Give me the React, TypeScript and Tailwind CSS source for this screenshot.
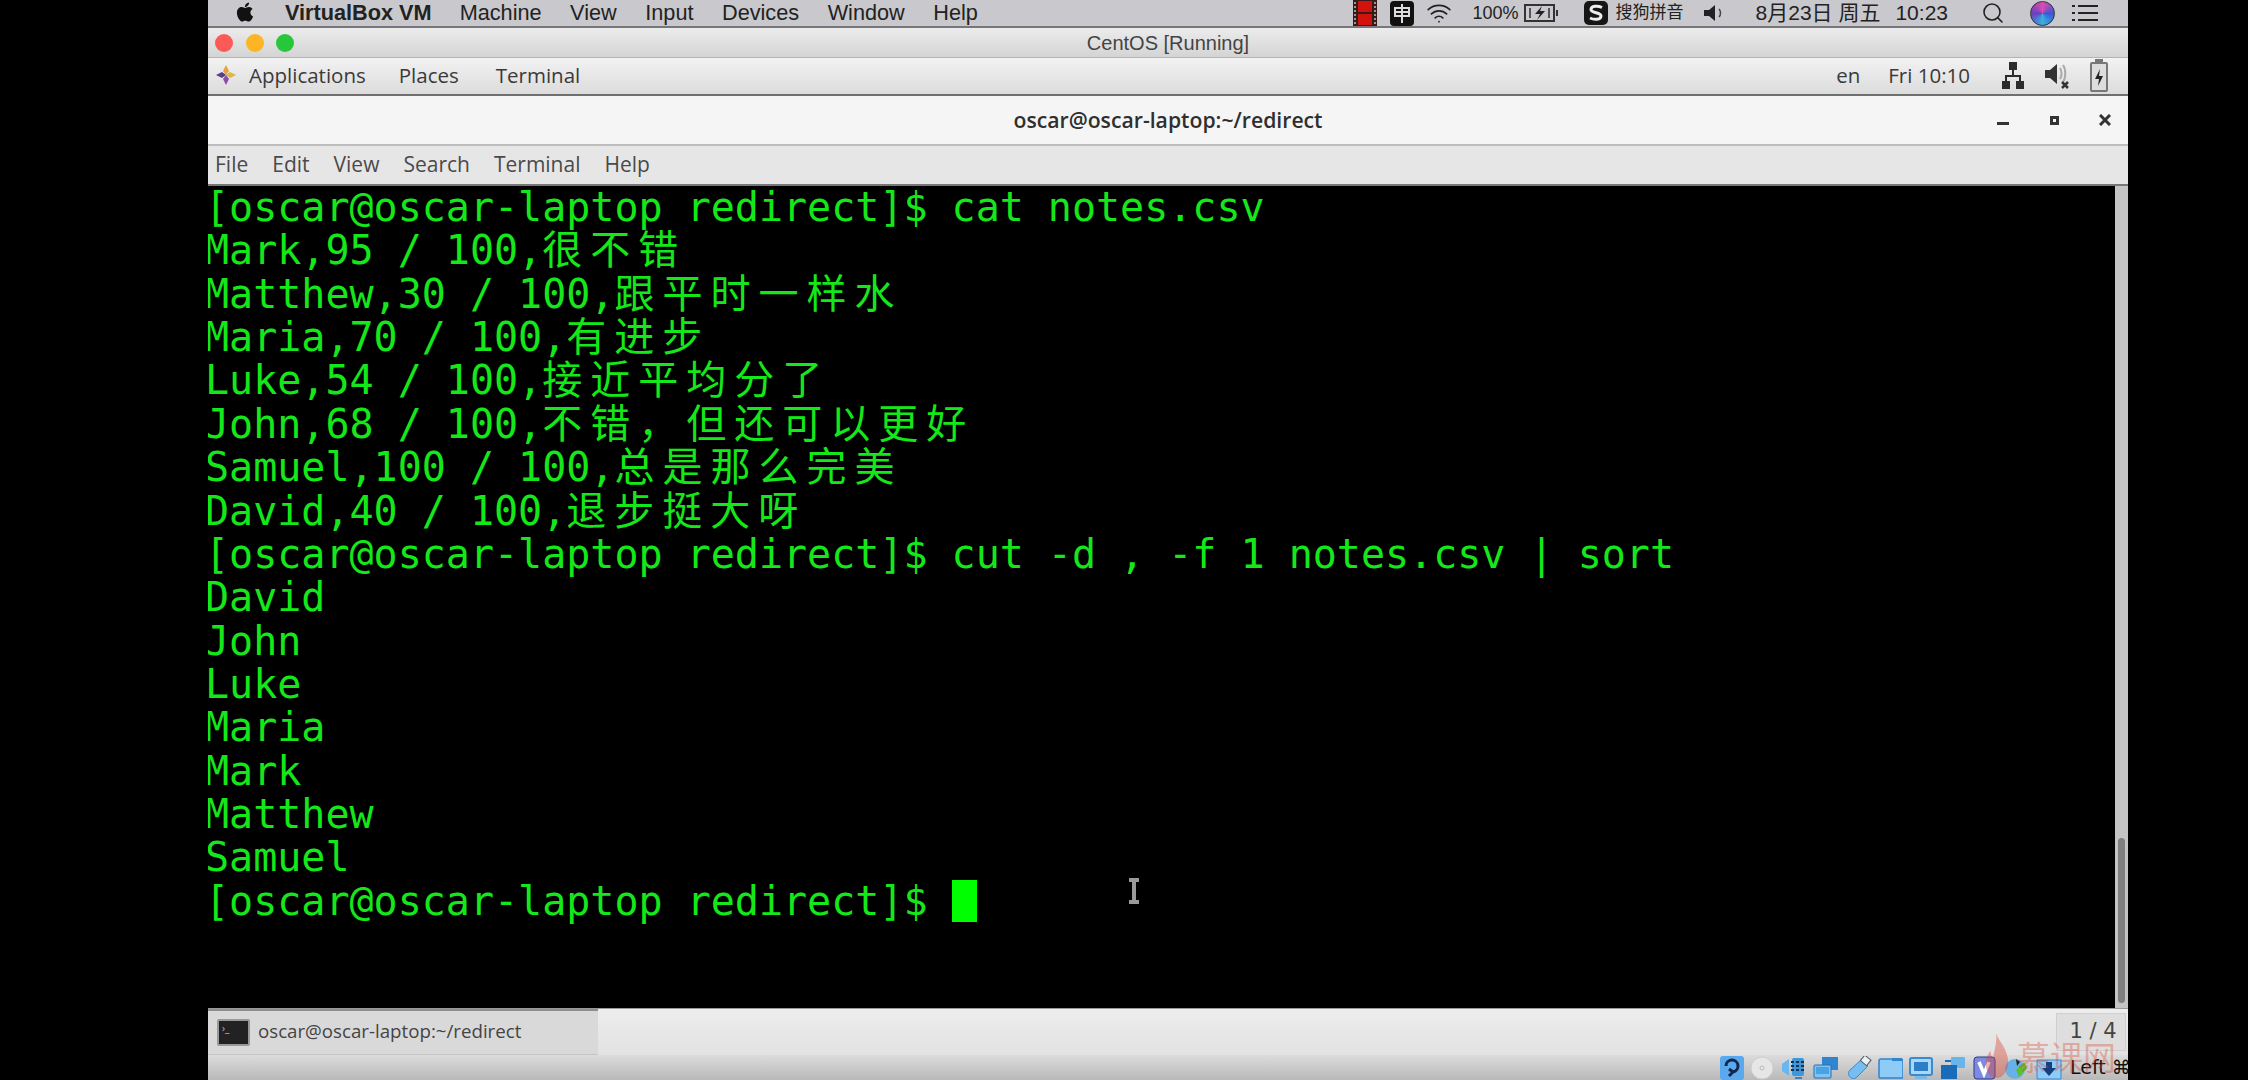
import { Search, Wifi } from 'lucide-react'
import { FaApple } from 'react-icons/fa'

const ui = "font-['Open_Sans','Noto_Sans_CJK_SC',sans-serif]"
const mac = "font-['Liberation_Sans','Noto_Sans_CJK_SC',sans-serif]"

type Line = { text: string; cjk?: string }

const lines: Line[] = [
  { text: '[oscar@oscar-laptop redirect]$ cat notes.csv' },
  { text: 'Mark,95 / 100,', cjk: '很不错' },
  { text: 'Matthew,30 / 100,', cjk: '跟平时一样水' },
  { text: 'Maria,70 / 100,', cjk: '有进步' },
  { text: 'Luke,54 / 100,', cjk: '接近平均分了' },
  { text: 'John,68 / 100,', cjk: '不错，但还可以更好' },
  { text: 'Samuel,100 / 100,', cjk: '总是那么完美' },
  { text: 'David,40 / 100,', cjk: '退步挺大呀' },
  { text: '[oscar@oscar-laptop redirect]$ cut -d , -f 1 notes.csv | sort' },
  { text: 'David' },
  { text: 'John' },
  { text: 'Luke' },
  { text: 'Maria' },
  { text: 'Mark' },
  { text: 'Matthew' },
  { text: 'Samuel' },
]

function MacMenuBar() {
  return (
    <div className={`h-[28px] shrink-0 flex items-center bg-[#c9c8cc] border-b-2 border-[#77767a] text-[21.700px] text-[#222] ${mac}`}>
      <FaApple className="ml-[26px] w-[22px] h-[22px] text-[#111] -mt-[3px]" />
      <span className="ml-[29px] font-bold">VirtualBox VM</span>
      <div className="ml-[28px] flex gap-[28.500px]">
        <span>Machine</span>
        <span>View</span>
        <span>Input</span>
        <span>Devices</span>
        <span>Window</span>
        <span>Help</span>
      </div>
      <div className="ml-auto flex items-center text-[21px]">
        <svg width="24" height="26" viewBox="0 0 24 26">
          <rect x="0" y="0" width="24" height="26" fill="#3a1a18" />
          <path d="M2 2v22M22 2v22" stroke="#999" strokeWidth="2" strokeDasharray="2 2" />
          <rect x="5" y="1" width="14" height="11" fill="#d2120d" />
          <rect x="5" y="14" width="14" height="11" fill="#d2120d" />
        </svg>
        <svg width="24" height="25" viewBox="0 0 24 25" className="ml-[13px]">
          <rect x="0" y="0" width="24" height="25" rx="4" fill="#111" />
          <path d="M5 7h14v8H5zM12 3v19M5 11h14" fill="none" stroke="#ddd" strokeWidth="2" />
        </svg>
        <Wifi className="ml-[10px] w-[30px] h-[26px] text-[#222]" strokeWidth={1.6} />
        <span className="ml-[19px] text-[18px]">100%</span>
        <svg width="36" height="20" viewBox="0 0 36 20" className="ml-[5px]">
          <rect x="1" y="2" width="29" height="16" fill="none" stroke="#333" strokeWidth="2" />
          <path d="M18 3l-7 8h5l-3 6 8-9h-5z" fill="#222" />
          <path d="M6 5v10M25 5v10" stroke="#555" strokeWidth="2" />
          <rect x="32" y="7" width="2" height="6" fill="#333" />
        </svg>
        <svg width="26" height="26" viewBox="0 0 26 26" className="ml-[23px]">
          <rect x="1" y="1" width="24" height="24" rx="5" fill="#161616" />
          <path d="M19 7.500c-4-2-11-2-11 2 0 4 10 2.500 10 6.500 0 4-7 4-11 2" fill="none" stroke="#eee" strokeWidth="3" />
        </svg>
        <span className="ml-[7px] text-[17px]">搜狗拼音</span>
        <svg width="22" height="20" viewBox="0 0 22 20" className="ml-[19px]">
          <path d="M1 7h5l6-5v16l-6-5H1z" fill="#222" />
          <path d="M16 6c2 2 2 6 0 8" fill="none" stroke="#444" strokeWidth="1.500" />
        </svg>
        <span className="ml-[31px]">8月23日 周五</span>
        <span className="ml-[15px]">10:23</span>
        <Search className="ml-[33px] w-[24px] h-[24px] text-[#222]" strokeWidth={1.6} />
        <div className="ml-[25px] w-[25px] h-[25px] rounded-full bg-[conic-gradient(#e04bb0,#3a57d8,#34b3e0,#6a3fc0,#e04bb0)] border border-[#333]" />
        <svg width="28" height="20" viewBox="0 0 28 20" className="ml-[16px] mr-[29px]">
          <path d="M7 3h20M7 10h20M7 17h20" stroke="#222" strokeWidth="2" />
          <path d="M1 3h3M1 10h3M1 17h3" stroke="#222" strokeWidth="2" />
        </svg>
      </div>
    </div>
  )
}

function VBoxTitle() {
  return (
    <div className="h-[30px] shrink-0 relative flex items-center bg-gradient-to-b from-[#ececec] to-[#d4d4d4] border-b border-[#b4b4b4]">
      <div className="ml-[7px] flex gap-[12.500px]">
        <div className="w-[18px] h-[18px] rounded-full bg-[#fb5a56]" />
        <div className="w-[18px] h-[18px] rounded-full bg-[#fdb526]" />
        <div className="w-[18px] h-[18px] rounded-full bg-[#27c73c]" />
      </div>
      <div className={`absolute inset-0 flex items-center justify-center text-[20px] text-[#444] ${mac}`}>CentOS [Running]</div>
    </div>
  )
}

function GnomePanel() {
  return (
    <div className={`h-[38px] shrink-0 flex items-center pb-[2px] bg-gradient-to-b from-[#f2f2f2] to-[#dcdcdc] border-b-2 border-[#6f6f6f] text-[20.500px] text-[#3a3a3a] ${ui}`}>
      <svg width="22" height="22" viewBox="0 0 22 22" className="ml-[7px]">
        <path d="M11 1l3 6-3 4-3-4z" fill="#e8a33a" />
        <path d="M21 11l-6 3-4-3 4-3z" fill="#d7b84a" />
        <path d="M11 21l-3-6 3-4 3 4z" fill="#8a4fa8" />
        <path d="M1 11l6-3 4 3-4 3z" fill="#5d3c8a" />
      </svg>
      <span className="ml-[12px]">Applications</span>
      <span className="ml-[33px]">Places</span>
      <span className="ml-[37px]">Terminal</span>
      <div className="ml-auto flex items-center">
        <span>en</span>
        <span className="ml-[28px]">Fri 10:10</span>
        <svg width="24" height="30" viewBox="0 0 24 30" className="ml-[31px]">
          <path d="M8 2h8v8H8zM1 21h8v8H1zM15 21h8v8h-8z" fill="#2b2b2b" />
          <path d="M12 10v6M5 21v-5h14v5" fill="none" stroke="#2b2b2b" strokeWidth="2" />
        </svg>
        <svg width="26" height="30" viewBox="0 0 26 30" className="ml-[19px]">
          <path d="M1 10h5l7-6v20l-7-6H1z" fill="#333" />
          <path d="M16 8c2 3 2 8 0 11M19 5c3 4 3 13 0 17" fill="none" stroke="#aaa" strokeWidth="2" />
          <path d="M18 22l6 6M24 22l-6 6" stroke="#333" strokeWidth="2.500" />
        </svg>
        <svg width="20" height="34" viewBox="0 0 20 34" className="ml-[19px] mr-[19px]">
          <rect x="2" y="5" width="16" height="28" rx="1" fill="#ddd" stroke="#777" strokeWidth="2" />
          <rect x="6" y="1" width="8" height="4" fill="#777" />
          <path d="M11 11l-5 10h4l-1 7 5-10h-4z" fill="#222" />
        </svg>
      </div>
    </div>
  )
}

function TerminalTitle() {
  return (
    <div className={`h-[50px] shrink-0 relative flex items-center bg-[#f5f5f5] border-b-2 border-[#bdbdbd] ${ui}`}>
      <span className="mx-auto font-semibold text-[21.200px] text-[#2f2f2f]">oscar@oscar-laptop:~/redirect</span>
      <div className="absolute right-0 top-0 h-full flex items-center">
        <div className="w-[12px] h-[3px] bg-[#333] mt-[7px] mr-[41px]" />
        <div className="w-[9px] h-[9px] border-[3px] border-[#333] mr-[40px]" />
        <svg width="12" height="12" viewBox="0 0 12 12" className="mr-[17px]">
          <path d="M1 1l10 10M11 1L1 11" stroke="#333" strokeWidth="3" />
        </svg>
      </div>
    </div>
  )
}

function TerminalMenu() {
  return (
    <div className={`h-[38px] shrink-0 flex items-center gap-[24px] pl-[7px] pb-[1px] bg-[#e6e6e6] text-[21px] text-[#4a4a4a] ${ui}`}>
      <span>File</span>
      <span>Edit</span>
      <span>View</span>
      <span>Search</span>
      <span>Terminal</span>
      <span>Help</span>
    </div>
  )
}

function TerminalBody() {
  return (
    <div className="flex-1 min-h-0 flex border-t-2 border-[#777]">
      <div className="flex-1 bg-black overflow-hidden font-['DejaVu_Sans_Mono','Noto_Sans_CJK_SC',monospace] text-[40px] leading-[43.37px] text-[#15e81a] whitespace-pre">
        <div className="-ml-[3px]">
          {lines.map((l, i) => (
            <div key={i} className="h-[43.37px]">
              {l.text}
              {l.cjk && <span className="leading-[0] tracking-[8px] font-['Noto_Sans_CJK_SC',sans-serif]">{l.cjk}</span>}
            </div>
          ))}
          <div className="h-[43.37px] flex items-center">
            <span>[oscar@oscar-laptop redirect]$ </span>
            <span className="inline-block w-[25px] h-[42px] bg-[#00ff00]" />
          </div>
        </div>
      </div>
      <div className="w-[13px] bg-[#c4c4c4] flex flex-col justify-end">
        <div className="h-[165px] mx-[3px] mb-[5px] rounded-full bg-[#7f7f7f]" />
      </div>
    </div>
  )
}

function TaskBar() {
  return (
    <div className={`h-[47px] shrink-0 flex bg-gradient-to-b from-[#ededed] to-[#e2e2e2] border-t border-[#999] ${ui}`}>
      <div className="w-[390px] flex items-center bg-[#d9d9d9] border-t-2 border-[#8f8f8f] border-b border-b-[#c4c4c4]">
        <div className="ml-[9px] w-[33px] h-[27px] border-2 border-[#999] bg-[#222] rounded-[2px] pl-[3px] text-[10px] leading-[14px] text-[#bbb]">›_</div>
        <span className="ml-[8px] pb-[2px] text-[18.700px] text-[#444]">oscar@oscar-laptop:~/redirect</span>
      </div>
      <div className="ml-auto w-[70px] h-[38px] mt-[4px] mr-[2px] pl-[4px] flex items-center justify-center bg-[#dedede] border border-[#cfcfcf] font-['DejaVu_Sans',sans-serif] text-[21px] text-[#444]">1 / 4</div>
    </div>
  )
}

function StatusIcons() {
  return (
    <div className="ml-auto flex items-center gap-[6.400px]">
      <svg width="24" height="24" viewBox="0 0 24 24">
        <rect width="24" height="24" rx="3" fill="#5aa9ee" />
        <path d="M6 10a6 6 0 1 1 7 6M9 20l4-4-4-3" fill="none" stroke="#12284a" strokeWidth="3" />
      </svg>
      <svg width="24" height="24" viewBox="0 0 24 24">
        <circle cx="12" cy="12" r="11" fill="#e6e6e6" stroke="#cdcdcd" />
        <circle cx="12" cy="12" r="2" fill="none" stroke="#bbb" />
      </svg>
      <svg width="26" height="24" viewBox="0 0 26 24">
        <path d="M1 8l7-5v17l-7-5z" fill="#69b6f0" />
        <rect x="11" y="2" width="12" height="18" rx="2" fill="#3d97dc" />
        <path d="M10 6h14M10 10h14M10 14h14" stroke="#15324f" strokeWidth="2" strokeDasharray="3 2" />
        <path d="M14 22h7" stroke="#2f85cf" strokeWidth="2" />
      </svg>
      <svg width="26" height="24" viewBox="0 0 26 24">
        <rect x="9" y="1" width="16" height="13" fill="#2f85cf" />
        <rect x="1" y="9" width="17" height="13" rx="1" fill="#7cc4f5" stroke="#2a6ca8" />
        <rect x="3" y="11" width="13" height="7" fill="#4aa2e6" />
      </svg>
      <svg width="26" height="24" viewBox="0 0 26 24">
        <path d="M15 4l7 6-11 11c-2 2-5 2-7 0s-2-5 0-7z" fill="#75bdf3" stroke="#3a8ad0" />
        <rect x="16" y="1" width="8" height="7" transform="rotate(40 20 4)" fill="#e6f2fb" stroke="#555" />
      </svg>
      <svg width="25" height="24" viewBox="0 0 25 24">
        <path d="M1 5a2 2 0 0 1 2-2h20a2 2 0 0 1 2 2v16a1 1 0 0 1-1 1H2a1 1 0 0 1-1-1z" fill="#8ecbf6" stroke="#2f85cf" strokeWidth="1.500" />
        <path d="M14 2h10v3H14z" fill="#2f85cf" />
      </svg>
      <svg width="24" height="24" viewBox="0 0 24 24">
        <rect x="1" y="2" width="22" height="17" rx="2" fill="#a8d8f8" stroke="#3a8ad0" strokeWidth="2" />
        <rect x="5" y="6" width="14" height="9" fill="#2d7ec6" />
        <rect x="6" y="20" width="12" height="3" fill="#7ab8e8" />
      </svg>
      <svg width="26" height="24" viewBox="0 0 26 24">
        <rect x="11" y="1" width="14" height="11" rx="1" fill="#6ab4ec" />
        <rect x="1" y="9" width="16" height="14" fill="#1a6bb8" />
        <path d="M5 5h6" stroke="#1a6bb8" strokeWidth="2" />
      </svg>
      <svg width="25" height="24" viewBox="0 0 25 24">
        <rect x="2" y="1" width="21" height="22" rx="3" fill="#7c8be0" stroke="#2c3c8a" />
        <path d="M7 6l5 12 5-12" fill="none" stroke="#fff" strokeWidth="3.500" />
      </svg>
      <svg width="26" height="24" viewBox="0 0 26 24">
        <circle cx="11" cy="13" r="10" fill="#6ab0e8" />
        <path d="M12 14l8-8 3 6-8 9z" fill="#59c030" />
        <path d="M12 3l4 3-3 4z" fill="#222" />
      </svg>
      <svg width="26" height="24" viewBox="0 0 26 24">
        <path d="M1 4h24v19H1z" fill="#8ecbf6" stroke="#3a8ad0" />
        <path d="M10 6h6v6h4l-7 8-7-8h4z" fill="#123f80" />
      </svg>
    </div>
  )
}

function StatusBar() {
  return (
    <div className="h-[25px] shrink-0 flex items-center overflow-hidden bg-gradient-to-b from-[#dcdcdc] to-[#b9b9b9] text-[19px] text-[#111] font-['DejaVu_Sans',sans-serif]">
      <StatusIcons />
      <span className="ml-[8px] whitespace-nowrap w-[58px]">Left ⌘</span>
    </div>
  )
}

export default function App() {
  return (
    <div className="relative w-[2248px] h-[1080px] overflow-hidden bg-black">
      <div className="ml-[208px] w-[1920px] h-full flex flex-col">
        <MacMenuBar />
        <VBoxTitle />
        <GnomePanel />
        <TerminalTitle />
        <TerminalMenu />
        <TerminalBody />
        <TaskBar />
        <StatusBar />
      </div>
      {/* mouse cursor */}
      <svg width="12" height="26" viewBox="0 0 12 26" className="absolute left-[1128px] top-[878px]">
        <path d="M1 2h10M1 24h10M6 2v22" stroke="#9a9a9a" strokeWidth="4" fill="none" />
      </svg>
      {/* watermark */}
      <div className="absolute left-[1985px] top-[1033px] flex items-center text-[#d9442f]/35 text-[33px] leading-none font-['Noto_Sans_CJK_SC',sans-serif]">
        <svg width="24" height="47" viewBox="0 0 30 48" preserveAspectRatio="none">
          <path d="M14 0c3 9 14 15 15 29 0 10-7 17-15 17S0 39 1 29c1-5 3-8 6-11 0 4 1 6 3 7 2-8 5-15 4-25z" fill="#d9442f" fillOpacity="0.4" />
        </svg>
        <span className="ml-[8px]">慕课网</span>
      </div>
    </div>
  )
}
